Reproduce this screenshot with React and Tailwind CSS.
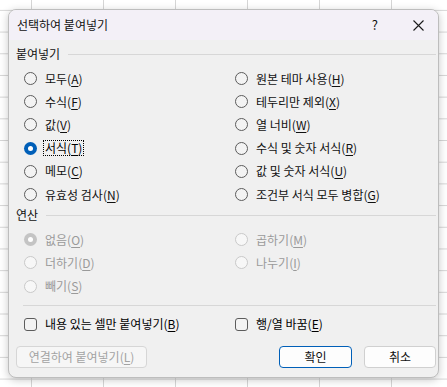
import React from 'react';

const font = { fontFamily: '"Noto Sans CJK KR", "Noto Sans", sans-serif' };

const Radio = ({ checked, disabled }) => {
  if (checked && disabled) {
    return (
      <span className="w-[13px] h-[13px] rounded-full bg-[#c4c4c4] flex items-center justify-center shrink-0">
        <span className="w-[5px] h-[5px] rounded-full bg-white" />
      </span>
    );
  }
  if (checked) {
    return (
      <span className="w-[13px] h-[13px] rounded-full bg-[#005fb8] flex items-center justify-center shrink-0">
        <span className="w-[5px] h-[5px] rounded-full bg-white" />
      </span>
    );
  }
  return (
    <span
      className={
        'w-[13px] h-[13px] rounded-full border shrink-0 ' +
        (disabled ? 'border-[#c9c9c9] bg-[#f7f7f7]' : 'border-[#5c5c5c] bg-[#f3f3f3]')
      }
    />
  );
};

const Label = ({ text, k }) => (
  <>
    {text}(<span className="underline underline-offset-2">{k}</span>)
  </>
);

const Option = ({ text, k, checked, disabled, focus }) => (
  <div className="flex items-center h-[23.2px] gap-[8px]">
    <Radio checked={checked} disabled={disabled} />
    {focus ? (
      <span className="border border-dotted border-black px-[1px] -ml-[2px] leading-[14px]">
        <Label text={text} k={k} />
      </span>
    ) : (
      <span className={disabled ? 'text-[#9a9a9a]' : 'text-[#111]'}>
        <Label text={text} k={k} />
      </span>
    )}
  </div>
);

const Check = ({ text, k }) => (
  <div className="flex items-center h-[23px] gap-[8px]">
    <span className="w-[13px] h-[13px] rounded-[3px] border border-[#5c5c5c] bg-[#f3f3f3] shrink-0" />
    <span>
      <Label text={text} k={k} />
    </span>
  </div>
);

const Section = ({ title }) => (
  <div className="flex items-center h-[16px] gap-[8px]">
    <span className="text-[#111]">{title}</span>
    <span className="flex-1 h-px bg-[#d7d7d7] mt-[1px]" />
  </div>
);

export default function App() {
  return (
    <div
      className="w-[447px] h-[387px] overflow-hidden bg-white pl-[8px] pt-[9px] text-[12px] leading-[16px] bg-[linear-gradient(to_right,#d6d6d6_1px,transparent_1px),linear-gradient(to_bottom,#d6d6d6_1px,transparent_1px)] [background-size:72px_21.7px] [background-position:31px_9.9px]"
      style={font}
    >
      <div className="w-[431px] h-[369px] rounded-[8px] bg-[#f0f0f0] border border-[#bdbdbd] shadow-[0_2px_8px_rgba(0,0,0,0.22)] overflow-hidden flex flex-col">
        {/* title bar */}
        <div className="h-[30px] bg-[#f3f0f7] flex items-center pl-[8px] shrink-0">
          <span className="text-[#111]">선택하여 붙여넣기</span>
          <span className="ml-auto text-[13px] text-[#111] mr-[35px]">?</span>
          <svg width="11" height="11" viewBox="0 0 11 11" className="mr-[14px]">
            <path d="M0.5 0.5 L10.5 10.5 M10.5 0.5 L0.5 10.5" stroke="#1a1a1a" strokeWidth="1.1" />
          </svg>
        </div>

        {/* body */}
        <div className="flex flex-col pl-[7px] pr-[2px]">
          <div className="mt-[6px]">
            <Section title="붙여넣기" />
          </div>
          <div className="grid grid-cols-[211px_1fr] pl-[8px] mt-[5px]">
            <div className="flex flex-col">
              <Option text="모두" k="A" />
              <Option text="수식" k="F" />
              <Option text="값" k="V" />
              <Option text="서식" k="T" checked focus />
              <Option text="메모" k="C" />
              <Option text="유효성 검사" k="N" />
            </div>
            <div className="flex flex-col">
              <Option text="원본 테마 사용" k="H" />
              <Option text="테두리만 제외" k="X" />
              <Option text="열 너비" k="W" />
              <Option text="수식 및 숫자 서식" k="R" />
              <Option text="값 및 숫자 서식" k="U" />
              <Option text="조건부 서식 모두 병합" k="G" />
            </div>
          </div>

          <div className="mt-[1px]">
            <Section title="연산" />
          </div>
          <div className="grid grid-cols-[211px_1fr] pl-[8px] mt-[5px]">
            <div className="flex flex-col">
              <Option text="없음" k="O" checked disabled />
              <Option text="더하기" k="D" disabled />
              <Option text="빼기" k="S" disabled />
            </div>
            <div className="flex flex-col">
              <Option text="곱하기" k="M" disabled />
              <Option text="나누기" k="I" disabled />
            </div>
          </div>

          <div className="h-px bg-[#d7d7d7] ml-[7px] mt-[7px]" />

          <div className="grid grid-cols-[211px_1fr] pl-[8px] mt-[7px]">
            <Check text="내용 있는 셀만 붙여넣기" k="B" />
            <Check text="행/열 바꿈" k="E" />
          </div>

          <div className="flex items-center mt-[10px]">
            <button className="w-[131px] h-[22px] rounded-[4px] border border-[#d6d6d6] bg-[#f6f6f6] text-[#a3a3a3] leading-[20px]">
              연결하여 붙여넣기(<span className="underline underline-offset-2">L</span>)
            </button>
            <button className="ml-auto w-[73px] h-[22px] rounded-[4px] border border-[#005fb8] bg-[#fdfdfd] text-[#111] leading-[20px]">
              확인
            </button>
            <button className="ml-[12px] w-[72px] h-[22px] rounded-[4px] border border-[#d0d0d0] bg-[#fdfdfd] text-[#111] leading-[20px]">
              취소
            </button>
          </div>
        </div>
      </div>
    </div>
  );
}
